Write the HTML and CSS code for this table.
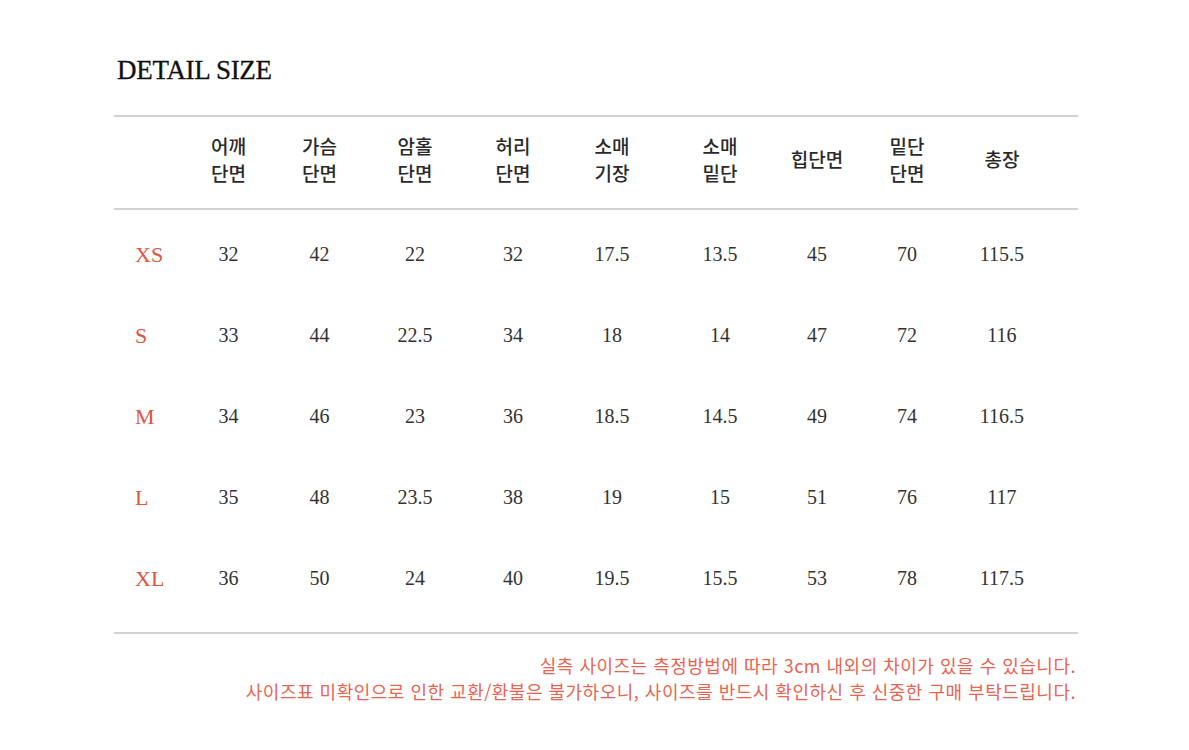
FILE: index.html
```html
<!DOCTYPE html>
<html lang="ko">
<head>
<meta charset="utf-8">
<title>DETAIL SIZE</title>
<link rel="stylesheet" href="styles.css">
</head>
<body>
<div class="page">
  <h1 class="title">DETAIL SIZE</h1>
  <div class="table">
    <div class="row head">
      <div class="cell label"></div>
      <div class="cell">어깨<br>단면</div>
      <div class="cell">가슴<br>단면</div>
      <div class="cell">암홀<br>단면</div>
      <div class="cell">허리<br>단면</div>
      <div class="cell">소매<br>기장</div>
      <div class="cell">소매<br>밑단</div>
      <div class="cell">힙단면</div>
      <div class="cell">밑단<br>단면</div>
      <div class="cell">총장</div>
      <div class="cell"></div>
    </div>
    <div class="body">
      <div class="row data">
        <div class="cell label">XS</div>
        <div class="cell">32</div><div class="cell">42</div><div class="cell">22</div><div class="cell">32</div><div class="cell">17.5</div><div class="cell">13.5</div><div class="cell">45</div><div class="cell">70</div><div class="cell">115.5</div><div class="cell"></div>
      </div>
      <div class="row data">
        <div class="cell label">S</div>
        <div class="cell">33</div><div class="cell">44</div><div class="cell">22.5</div><div class="cell">34</div><div class="cell">18</div><div class="cell">14</div><div class="cell">47</div><div class="cell">72</div><div class="cell">116</div><div class="cell"></div>
      </div>
      <div class="row data">
        <div class="cell label">M</div>
        <div class="cell">34</div><div class="cell">46</div><div class="cell">23</div><div class="cell">36</div><div class="cell">18.5</div><div class="cell">14.5</div><div class="cell">49</div><div class="cell">74</div><div class="cell">116.5</div><div class="cell"></div>
      </div>
      <div class="row data">
        <div class="cell label">L</div>
        <div class="cell">35</div><div class="cell">48</div><div class="cell">23.5</div><div class="cell">38</div><div class="cell">19</div><div class="cell">15</div><div class="cell">51</div><div class="cell">76</div><div class="cell">117</div><div class="cell"></div>
      </div>
      <div class="row data">
        <div class="cell label">XL</div>
        <div class="cell">36</div><div class="cell">50</div><div class="cell">24</div><div class="cell">40</div><div class="cell">19.5</div><div class="cell">15.5</div><div class="cell">53</div><div class="cell">78</div><div class="cell">117.5</div><div class="cell"></div>
      </div>
    </div>
  </div>
  <div class="notes">
    <p>실측 사이즈는 측정방법에 따라 3cm 내외의 차이가 있을 수 있습니다.</p>
    <p>사이즈표 미확인으로 인한 교환/환불은 불가하오니, 사이즈를 반드시 확인하신 후 신중한 구매 부탁드립니다.</p>
  </div>
</div>
</body>
</html>
```

FILE: styles.css
```css
html, body {
  margin: 0;
  padding: 0;
  background: #ffffff;
}

.page {
  width: 964px;
  margin-left: 114px;
  padding-top: 55px;
}

.title {
  margin: 0 0 30px 3px;
  font-family: "Liberation Serif", "Times New Roman", serif;
  font-weight: 400;
  font-size: 27px;
  line-height: 30px;
  color: #111111;
  letter-spacing: -0.3px;
  -webkit-text-stroke: 0.3px #111111;
}

.table {
  border-top: 2px solid #d2d2d2;
  border-bottom: 2px solid #d2d2d2;
}

.row {
  display: grid;
  grid-template-columns: 70px 89px 93px 98px 98px 100px 116px 78px 102px 88px 1fr;
  align-items: center;
}

.head {
  height: 83px;
  padding-bottom: 8px;
  border-bottom: 2px solid #d2d2d2;
  font-family: "Noto Sans CJK KR", "Noto Sans", sans-serif;
  font-size: 19px;
  font-weight: 500;
  line-height: 27px;
  color: #2a2a2a;
}

.cell {
  text-align: center;
}

.body {
  padding-top: 4px;
  padding-bottom: 13px;
}

.data {
  height: 81px;
  font-family: "Liberation Serif", "Times New Roman", serif;
  font-size: 20px;
  color: #333333;
}

.data .label {
  text-align: left;
  padding-left: 21px;
  font-size: 22px;
  color: #e0553f;
}

.notes {
  margin-top: 18px;
  text-align: right;
  font-family: "Noto Sans CJK KR", "Noto Sans", sans-serif;
  font-size: 18px;
  letter-spacing: 0.5px;
  line-height: 26px;
  color: #ea6450;
  padding-right: 2px;
}

.notes p {
  margin: 0;
}
```
